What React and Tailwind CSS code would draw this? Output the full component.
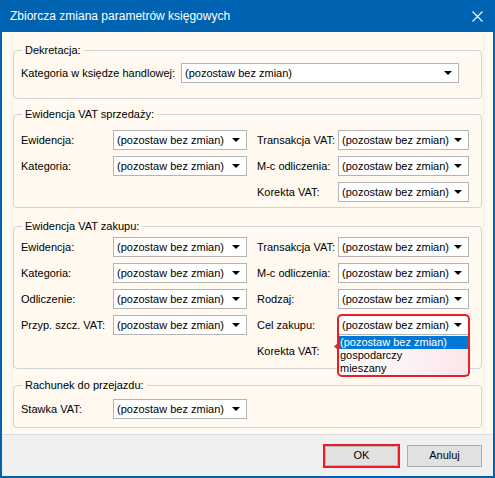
import React from 'react'

const KEEP = '(pozostaw bez zmian)'

function Arrow() {
  return (
    <svg width="8" height="4" viewBox="0 0 8 4" className="shrink-0">
      <path d="M0 0h8L4 4z" fill="#000" />
    </svg>
  )
}

function Combo({ w = 'w-[134px]' }) {
  return (
    <div className={`${w} h-[20px] flex items-center bg-white border border-[#b4b4b4] pl-[3px] pr-[6px]`}>
      <span className="flex-1 whitespace-nowrap overflow-hidden">{KEEP}</span>
      <Arrow />
    </div>
  )
}

function Label({ children }) {
  return <span className="whitespace-nowrap leading-[14px]">{children}</span>
}

function Group({ title, className, children }) {
  return (
    <fieldset className={`border border-[#d3d3d3] rounded-[4px] pl-[7px] ${className}`}>
      <legend className="ml-[1px] px-[3px] leading-[14px]">{title}</legend>
      {children}
    </fieldset>
  )
}

// rozwinięta lista "Cel zakupu" z czerwonym obramowaniem
function OpenCombo() {
  return (
    <div className="relative">
      <Combo w="w-[131px]" />
      <div className="absolute left-[1px] top-[21px] w-[130px] z-10 bg-white border-r border-b border-[#7a7a7a] leading-[13px]">
        <div className="h-[13px] bg-[#0078d7] text-white pl-[1px]">{KEEP}</div>
        <div className="h-[13px] pl-[1px] bg-gradient-to-r from-white to-[#fbe6ea]">gospodarczy</div>
        <div className="h-[13px] pl-[1px] bg-gradient-to-r from-white to-[#fbe6ea]">mieszany</div>
      </div>
      <div className="absolute left-[-1px] top-[-1px] w-[133px] h-[63px] z-20 border-2 border-[#ee1c25] rounded-[5px] pointer-events-none" />
      <svg width="4" height="7" viewBox="0 0 4 7" className="absolute left-[-4px] top-[28px] z-20">
        <path d="M4 0L0 3.5L4 7z" fill="#ee1c25" />
      </svg>
    </div>
  )
}

export default function App() {
  return (
    <div className="w-[495px] h-[478px] bg-[#0063b1] flex flex-col text-[11px] text-black font-['Liberation_Sans',Arial,sans-serif]">
      {/* Title bar */}
      <div className="h-[32px] shrink-0 flex items-center pl-[10px] text-white text-[12px]">
        <span>Zbiorcza zmiana parametrów księgowych</span>
        <svg width="11" height="11" viewBox="0 0 11 11" className="ml-auto mr-[12px]">
          <path d="M0.5 0.5L10.5 10.5M10.5 0.5L0.5 10.5" stroke="#fff" strokeWidth="1.1" />
        </svg>
      </div>

      <div className="flex-1 mx-[2px] mb-[2px] flex flex-col bg-[#fff9ef]">
        <div className="flex-1 px-[11px] pt-[11px]">
          <Group title="Dekretacja:" className="pt-[6px] pb-[15px]">
            <div className="flex items-center">
              <div className="w-[160px]"><Label>Kategoria w księdze handlowej:</Label></div>
              <Combo w="w-[278px]" />
            </div>
          </Group>

          <Group title="Ewidencja VAT sprzedaży:" className="mt-[8px] pt-[9px] pb-[5px]">
            <div className="grid grid-cols-[92px_144px_81px_131px] auto-rows-[20px] gap-y-[6px] items-center">
              <Label>Ewidencja:</Label>
              <Combo />
              <Label>Transakcja VAT:</Label>
              <Combo w="w-[131px]" />
              <Label>Kategoria:</Label>
              <Combo />
              <Label>M-c odliczenia:</Label>
              <Combo w="w-[131px]" />
              <div />
              <div />
              <Label>Korekta VAT:</Label>
              <Combo w="w-[131px]" />
            </div>
          </Group>

          <Group title="Ewidencja VAT zakupu:" className="mt-[11px] pt-[4px] pb-[7px]">
            <div className="grid grid-cols-[92px_144px_81px_131px] auto-rows-[20px] gap-y-[6px] items-center">
              <Label>Ewidencja:</Label>
              <Combo />
              <Label>Transakcja VAT:</Label>
              <Combo w="w-[131px]" />
              <Label>Kategoria:</Label>
              <Combo />
              <Label>M-c odliczenia:</Label>
              <Combo w="w-[131px]" />
              <Label>Odliczenie:</Label>
              <Combo />
              <Label>Rodzaj:</Label>
              <Combo w="w-[131px]" />
              <Label>Przyp. szcz. VAT:</Label>
              <Combo />
              <Label>Cel zakupu:</Label>
              <OpenCombo />
              <div />
              <div />
              <Label>Korekta VAT:</Label>
              {/* pole zasłonięte przez rozwiniętą listę */}
              <div />
            </div>
          </Group>

          <Group title="Rachunek do przejazdu:" className="mt-[9px] pt-[7px] pb-[8px]">
            <div className="flex items-center">
              <div className="w-[92px]"><Label>Stawka VAT:</Label></div>
              <Combo />
            </div>
          </Group>
        </div>

        {/* Footer */}
        <div className="h-[42px] shrink-0 bg-[#f0f0f0] border-t border-[#dcdcdc] flex items-center justify-end pr-[11px] gap-[7px]">
          <button className="w-[77px] h-[24px] border-2 border-[#ee1c25] bg-[#e1e1e1] shadow-[inset_0_0_0_1px_#b9b9b9]">
            OK
          </button>
          <button className="w-[75px] h-[22px] border border-[#adadad] bg-[#e1e1e1]">
            Anuluj
          </button>
        </div>
      </div>
    </div>
  )
}
